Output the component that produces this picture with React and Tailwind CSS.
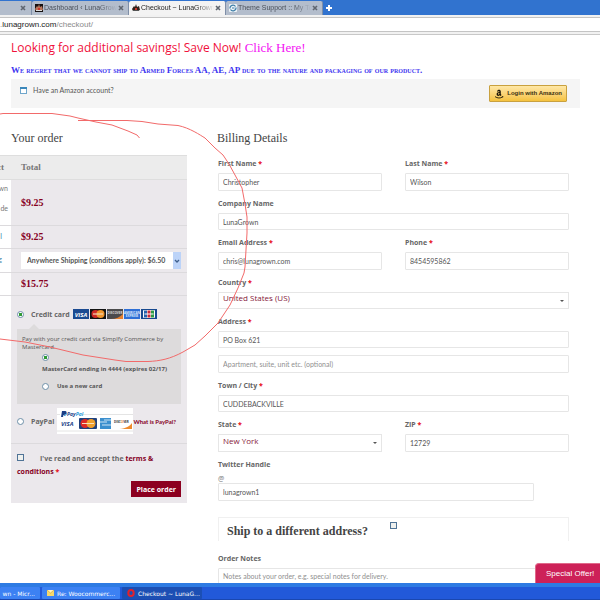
import React from "react";
import clsx from "clsx";

const SERIF = "font-['Liberation_Serif',serif]";
const FIELD =
  "block w-full rounded-[1px] border border-[#e6e6e6] bg-white px-1 font-['Lato',sans-serif] text-[7px] leading-[12px] text-[#555] placeholder:text-[#8f8f8f] outline-none";
const RADIO =
  "block h-[7px] w-[7px] shrink-0 appearance-none rounded-full border border-[#6d8fa8] bg-white checked:bg-[radial-gradient(circle,#2f9a35_0_40%,#ffffff_55%)]";
const CHECKBOX =
  "block h-[7px] w-[7px] shrink-0 appearance-none border border-[#4f7396] bg-[#eef0ee]";

function Close({ className }) {
  return (
    <svg viewBox="0 0 6 6" className={clsx("h-[6px] w-[6px] shrink-0", className)}>
      <path d="M1 1l4 4M5 1l-4 4" stroke="#5f6670" strokeWidth="1.6" />
    </svg>
  );
}

function LunaIcon({ dark }) {
  return (
    <svg viewBox="0 0 8 8" className="h-2 w-2 shrink-0">
      {dark && <rect width="8" height="8" fill="#15100f" />}
      <path d="M0 5l2-3 1 1 1-3 1 3 2-1 1 4-3 1-2-1-2 1z" fill={dark ? "#b8765c" : "#30201a"} />
      <path d="M3 4h2v2H3z" fill="#c6342a" />
      <path d="M1 6h6v1H1z" fill={dark ? "#ddd" : "#555"} />
    </svg>
  );
}

function SupportIcon() {
  return (
    <svg viewBox="0 0 8 8" className="h-2 w-2 shrink-0">
      <rect width="8" height="8" rx="1" fill="#eef4f8" />
      <path d="M1 4.500A3 3 0 0 1 6.500 2.500M7 3.500A3 3 0 0 1 1.500 5.500" fill="none" stroke="#3f7fa8" strokeWidth="1.3" />
      <path d="M3 4h2.500" stroke="#3f7fa8" />
    </svg>
  );
}

function Tab({ icon, label, active }) {
  return (
    <div
      className={clsx(
        "flex w-[97px] shrink-0 items-center gap-px rounded-t-[2px] border-r border-[#7f8fa8] pr-1 pl-[3px]",
        active ? "bg-[#f3f3f3] text-[#222]" : "bg-[#b3bdcc] text-[#4a505a]",
      )}
    >
      {icon}
      <span className="min-w-0 flex-1 overflow-hidden text-[7px] whitespace-nowrap [mask-image:linear-gradient(to_right,#000_75%,transparent)]">
        {label}
      </span>
      <Close />
    </div>
  );
}

function BrowserBar() {
  return (
    <header className="shrink-0 font-['Liberation_Sans',sans-serif]">
      <nav className="flex h-[15px] items-stretch bg-[#3173cf] pt-px">
        <div className="flex w-8 shrink-0 items-center justify-end border-r border-[#7f8fa8] bg-[#b3bdcc] pr-[5px]">
          <Close />
        </div>
        <Tab icon={<LunaIcon dark />} label="Dashboard ‹ LunaGrown" />
        <Tab icon={<LunaIcon />} label="Checkout ~ LunaGrown |" active />
        <Tab icon={<SupportIcon />} label="Theme Support :: My To" />
        <button aria-label="New tab" className="ml-[3px] flex items-center">
          <svg viewBox="0 0 6 6" className="h-[6px] w-[6px]">
            <path d="M3 0v6M0 3h6" stroke="#fff" strokeWidth="2" />
          </svg>
        </button>
      </nav>
      <div className="border-b border-[#c8c8c8] bg-[#f1f1f1] py-[2px]">
        <div className="h-[15px] border-y border-[#c4c4c4] bg-white text-[8px] leading-[13px] whitespace-nowrap text-[#8a8a8a]">
          .<span className="text-[#222]">lunagrown.com</span>/checkout/
        </div>
      </div>
    </header>
  );
}

function AmazonLogo() {
  return (
    <svg viewBox="0 0 10 10" className="h-[10px] w-[10px]">
      <path
        d="M3 2.600C3.300.300 6.800.300 6.800 2.500V5.200l.800.900-1.100 1-.8-.9C4.600 7.500 2.600 7 2.600 5.200 2.600 3.500 4 3.200 5.400 3.100 5.500 1.900 4.500 1.800 4.200 2.800zM5.400 4.100C4.500 4.100 4.100 4.400 4.100 5.100c0 .8 1.300.9 1.300-.5z"
        fill="#1c1608"
      />
      <path d="M1 7.600c2.500 1.800 5.300 1.800 7.700.3" fill="none" stroke="#1c1608" strokeWidth=".9" />
      <path d="M7.600 7.300l1.800-.1-.4 1.600z" fill="#1c1608" />
    </svg>
  );
}

function AmazonBanner() {
  return (
    <div className="mt-[3px] flex h-[29px] items-start justify-between bg-[#f5f5f5] pr-[13px] pl-[9px]">
      <p className="flex items-center gap-[6px] pt-[6px] font-['Lato',sans-serif] text-[7px] leading-[11px] text-[#555]">
        <svg viewBox="0 0 7 7" className="h-[7px] w-[7px]">
          <rect x=".5" y=".5" width="6" height="6" fill="#fff" stroke="#6fa6cb" />
          <path d="M0 1h7" stroke="#3b87ba" strokeWidth="2" />
        </svg>
        Have an Amazon account?
      </p>
      <button className="mt-[6px] flex h-[17px] items-center gap-[3px] rounded-[1px] border border-[#c9a13f] bg-linear-to-b from-[#ffe8a6] to-[#f5c23c] px-1 font-['Liberation_Sans',sans-serif] text-[6px] font-bold whitespace-nowrap text-[#3d3010]">
        <AmazonLogo />
        Login with Amazon
      </button>
    </div>
  );
}

function Visa() {
  return (
    <svg viewBox="0 0 16 10" className="h-[10px] w-4">
      <rect width="16" height="10" fill="#1b4a91" />
      <text x="8" y="7.500" textAnchor="middle" fontSize="6" fontWeight="bold" fontStyle="italic" fill="#fff">VISA</text>
    </svg>
  );
}

function MasterCard() {
  return (
    <svg viewBox="0 0 16 10" className="h-[10px] w-4">
      <rect width="16" height="10" fill="#121212" />
      <circle cx="5.500" cy="5" r="4" fill="#cf2a26" />
      <circle cx="10.500" cy="5" r="4" fill="#f0962d" />
      <path d="M3 5h10" stroke="#f4d9b8" strokeWidth="1.200" />
    </svg>
  );
}

function Discover() {
  return (
    <svg viewBox="0 0 16 10" className="h-[10px] w-4">
      <rect width="16" height="10" fill="#4b4b4d" />
      <path d="M16 5v5H4c5 0 9-2 12-5z" fill="#e58130" />
      <text x="8" y="5" textAnchor="middle" fontSize="3" fontWeight="bold" fill="#ddd">DISCOVER</text>
    </svg>
  );
}

function Amex() {
  return (
    <svg viewBox="0 0 16 10" className="h-[10px] w-4">
      <rect width="16" height="10" fill="#2f6fd6" />
      <text x="8" y="4.500" textAnchor="middle" fontSize="3" fontWeight="bold" fill="#dbe8fb">AMERICAN</text>
      <text x="8" y="8" textAnchor="middle" fontSize="3" fontWeight="bold" fill="#dbe8fb">EXPRESS</text>
    </svg>
  );
}

function Jcb() {
  return (
    <svg viewBox="0 0 16 10" className="h-[10px] w-4">
      <rect width="16" height="10" fill="#17498f" />
      <rect x="2" y="1" width="12" height="8" rx="1" fill="#fff" />
      <rect x="3" y="1.500" width="3" height="7" fill="#2463ab" />
      <rect x="6.500" y="1.500" width="3" height="7" fill="#c92a39" />
      <rect x="10" y="1.500" width="3" height="7" fill="#2f9a45" />
      <path d="M3.500 5h9" stroke="#fff" strokeWidth="1" />
    </svg>
  );
}

function PayPalMark() {
  return (
    <svg viewBox="0 0 76 26" className="h-[26px] w-[76px] shrink-0">
      <rect width="76" height="26" fill="#fff" />
      <path d="M0 6.500h3M25 6.500h51M0 23h76" stroke="#e4e4e4" />
      <path d="M5 3h3.500q2 1 .5 3-1 1-2.500 1L6 9H4z" fill="#1b3f86" />
      <path d="M7 7.500q2.500 0 3-2.500" stroke="#2a9ad8" fill="none" />
      <text x="10" y="8" fontSize="5" fontWeight="bold" fontStyle="italic" fill="#1b3f86">
        Pay<tspan fill="#2a9ad8">Pal</tspan>
      </text>
      <text x="4" y="18" fontSize="6" fontWeight="bold" fontStyle="italic" fill="#1b3f86">VISA</text>
      <rect x="22" y="10" width="18" height="11" rx="1" fill="#20407c" />
      <circle cx="28" cy="15.500" r="4.500" fill="#dc2b27" />
      <circle cx="34" cy="15.500" r="4.500" fill="#f0a02d" />
      <path d="M25 15.500h12" stroke="#f8dfc0" />
      <rect x="43" y="10" width="11" height="11" fill="#3b8fce" />
      <path d="M43 14h7M45 17h9M47 12h7" stroke="#cfe6f6" />
      <path d="M75 15v6H60c7 0 12-2 15-6z" fill="#ee8a2c" />
      <text x="57" y="15" fontSize="3" fontWeight="bold" fill="#333">
        DISC<tspan fill="#ee8a2c">O</tspan>VER
      </text>
    </svg>
  );
}

// the first column runs off the left edge of the window
function OrderRow({ name, height, children }) {
  return (
    <tr className={clsx("border-b border-[#dcdadd]", height)}>
      <td className="bg-white p-0 align-top font-['Lato',sans-serif] text-[7px] leading-[20px] text-[#777]">
        <div className="flex justify-end overflow-hidden pr-[3px]">{name}</div>
      </td>
      <td className="bg-[#ebe8ec] py-0 pr-[6px] pl-[10px]">{children}</td>
    </tr>
  );
}

function Price({ children }) {
  return <span className={clsx(SERIF, "block text-[10px] leading-[12px] font-bold text-[#86001d]")}>{children}</span>;
}

function Order() {
  return (
    <section>
      <h3 className={clsx(SERIF, "pl-[11px] text-[12px] leading-[16px] text-[#444]")}>Your order</h3>
      <table className="mt-[9px] w-full table-fixed border-collapse">
        <colgroup>
          <col className="w-[11px]" />
          <col />
        </colgroup>
        <thead>
          <tr className={clsx(SERIF, "h-6 border-y border-[#dedede] bg-[#ececec] text-left text-[9px] text-[#777]")}>
            <th className="p-0 text-right">
              <div className="flex justify-end overflow-hidden pr-[7px]">ct</div>
            </th>
            <th className="py-0 pl-[10px]">Total</th>
          </tr>
        </thead>
        <tbody>
          <OrderRow
            height="h-[46px]"
            name={
              <span className="-mt-[2px] text-right">
                wn
                <br />
                de
              </span>
            }
          >
            <Price>$9.25</Price>
          </OrderRow>
          <OrderRow height="h-[23px]" name={<span className="pr-[6px] text-[#3a7ea6]">l</span>}>
            <Price>$9.25</Price>
          </OrderRow>
          <OrderRow height="h-6" name={<span className="pr-[6px] text-[#3a7ea6]">g</span>}>
            <div className="flex h-[17px] items-stretch bg-white">
              <select
                aria-label="Shipping"
                className="min-w-0 flex-1 appearance-none pl-[6px] font-['Lato',sans-serif] text-[7px] font-bold text-[#555] outline-none"
              >
                <option>Anywhere Shipping (conditions apply): $6.50</option>
              </select>
              <span className="flex w-2 items-center justify-center bg-[#bcd3f8]">
                <svg viewBox="0 0 6 6" className="h-[6px] w-[6px]">
                  <path d="M1 2l2 2 2-2" fill="none" stroke="#3f5f8c" strokeWidth="1.300" />
                </svg>
              </span>
            </div>
          </OrderRow>
          <OrderRow height="h-[23px]">
            <Price>$15.75</Price>
          </OrderRow>
        </tbody>
      </table>
      <Payment />
    </section>
  );
}

function Payment() {
  return (
    <div className="ml-[11px] bg-[#ebe8ec] pb-[6px] text-[7px] leading-[9px] text-[#666]">
      <div className="border-b border-[#dcdadd] px-[6px] pt-[13px] pb-[9px]">
        <div className="flex items-center">
          <input type="radio" name="method" id="card" defaultChecked className={RADIO} />
          <label htmlFor="card" className="flex items-center gap-[3px] pl-[7px] font-bold">
            Credit card
            <span className="flex gap-px">
              <Visa />
              <MasterCard />
              <Discover />
              <Amex />
              <Jcb />
            </span>
          </label>
        </div>
        <svg viewBox="0 0 10 5" className="mt-[5px] ml-3 block h-[5px] w-[10px]">
          <path d="M0 5l5-5 5 5z" fill="#dddbdc" />
        </svg>
        <div className="bg-[#dddbdc] px-[5px] pt-[6px] pb-[13px]">
          <p className="text-[6px] leading-[8px] text-[#555]">
            Pay with your credit card via Simplfy Commerce by Mastercard.
          </p>
          <div className="pt-[3px] pl-5 text-[6px] font-bold text-[#555]">
            <input type="radio" name="saved" id="saved" defaultChecked className={RADIO} />
            <label htmlFor="saved" className="mt-[4px] block whitespace-nowrap">
              MasterCard ending in 4444 (expires 02/17)
            </label>
            <div className="mt-2 flex items-center gap-2">
              <input type="radio" name="saved" id="new" className={RADIO} />
              <label htmlFor="new">Use a new card</label>
            </div>
          </div>
        </div>
        <div className="mt-1 flex items-center">
          <input type="radio" name="method" id="paypal" className={RADIO} />
          <label htmlFor="paypal" className="flex items-center gap-[3px] pl-[7px] font-bold">
            PayPal
            <PayPalMark />
          </label>
          <a href="#paypal" className="font-['Lato',sans-serif] text-[6px] font-bold whitespace-nowrap text-[#86001d]">
            What is PayPal?
          </a>
        </div>
      </div>
      <div className="px-[6px] pt-2">
        <div className="font-bold leading-[13px]">
          <input type="checkbox" id="terms" className={clsx(CHECKBOX, "mr-4 inline-block")} />
          <label htmlFor="terms">I've read and accept the</label>{" "}
          <a href="#terms" className="text-[#86001d]">
            terms &amp; conditions
          </a>{" "}
          <span className="text-red-600">*</span>
        </div>
        <button className="mt-[3px] ml-auto block h-4 bg-[#8c0020] px-[5px] text-[7px] font-bold text-white">
          Place order
        </button>
      </div>
    </div>
  );
}

function Label({ htmlFor, required, children }) {
  return (
    <label htmlFor={htmlFor} className="mb-[3px] block text-[7px] leading-[12px] font-bold text-[#666]">
      {children}
      {required && <span className="text-red-600"> *</span>}
    </label>
  );
}

function Field({ id, label, required, wide, ...rest }) {
  return (
    <div className={clsx(wide && "col-span-2")}>
      <Label htmlFor={id} required={required}>
        {label}
      </Label>
      <input id={id} className={clsx(FIELD, wide ? "h-[17px]" : "h-[18px]")} {...rest} />
    </div>
  );
}

function SelectField({ id, label, wide, value }) {
  return (
    <div className={clsx(wide && "col-span-2")}>
      <Label htmlFor={id} required>
        {label}
      </Label>
      <div className={clsx("flex items-center border border-[#e6e6e6] pr-1", wide ? "h-[17px]" : "h-[18px]")}>
        <select
          id={id}
          className="min-w-0 flex-1 appearance-none bg-transparent pb-[5px] pl-1 text-[8px] leading-[12px] text-[#86193a] outline-none"
        >
          <option>{value}</option>
        </select>
        <svg viewBox="0 0 4 2" className="h-[2px] w-1">
          <path d="M0 0h4L2 2z" fill="#555" />
        </svg>
      </div>
    </div>
  );
}

function Billing() {
  return (
    <section className="min-w-0 pr-[31px] pl-[30px]">
      <h3 className={clsx(SERIF, "text-[12px] leading-[16px] text-[#444]")}>Billing Details</h3>
      <form className="ml-px">
        <div className="grid grid-cols-2 gap-x-[23px] gap-y-[7px] pt-3">
          <Field id="first" label="First Name" required defaultValue="Christopher" />
          <Field id="last" label="Last Name" required defaultValue="Wilson" />
          <Field id="company" label="Company Name" wide defaultValue="LunaGrown" />
          <Field id="email" label="Email Address" required defaultValue="chris@lunagrown.com" />
          <Field id="phone" label="Phone" required defaultValue="8454595862" />
          <SelectField id="country" label="Country" wide value="United States (US)" />
          <Field id="address" label="Address" required wide defaultValue="PO Box 621" />
          <input
            aria-label="Address line 2"
            placeholder="Apartment, suite, unit etc. (optional)"
            className={clsx(FIELD, "col-span-2 h-[18px]")}
          />
          <Field id="city" label="Town / City" required wide defaultValue="CUDDEBACKVILLE" />
          <SelectField id="state" label="State" value="New York" />
          <Field id="zip" label="ZIP" required defaultValue="12729" />
        </div>
        <div className="mt-[7px]">
          <Label htmlFor="twitter">Twitter Handle</Label>
          <p className="text-[7px] leading-[9px] text-[#777]">@</p>
          <input id="twitter" defaultValue="lunagrown1" className={clsx(FIELD, "h-[18px] max-w-[90%]")} />
        </div>
        <div className="mt-4 flex items-start gap-[22px] border-x border-t border-[#f0f0f0] pt-1 pb-[3px] pl-2">
          <label htmlFor="ship" className={clsx(SERIF, "pt-[2px] text-[12px] leading-[14px] font-bold text-[#444]")}>
            Ship to a different address?
          </label>
          <input type="checkbox" id="ship" className={CHECKBOX} />
        </div>
        <div className="mt-3">
          <Label htmlFor="notes">Order Notes</Label>
          <textarea
            id="notes"
            placeholder="Notes about your order, e.g. special notes for delivery."
            className={clsx(FIELD, "h-10 resize-none py-px")}
          />
        </div>
      </form>
    </section>
  );
}

function PenMarks() {
  return (
    <svg
      viewBox="0 0 260 380"
      className="pointer-events-none absolute top-0 left-0 h-[380px] w-[260px]"
      fill="none"
      stroke="#f26a6a"
      strokeWidth="1"
    >
      <path d="M0 114L3 113.500H52L70 116 78 118 96 122 112 125 128 131 137 135 139.500 138" />
      <path d="M78 120.500H127L142 121.500 158 124 178 125.500C190 128 200 135 205 138L215 148 223 155 229 164 235 175 242 188 245 204 247 217V233L245 267 244 273 238 288 230 305 218 323 205 336 195 345 183 352C170 359 160 361 148 361.500H126L115 360 83 355 50 347 25 342 0 339" />
    </svg>
  );
}

function Taskbar() {
  const item = "flex h-3 items-center gap-[3px] rounded-[1px] px-[5px] whitespace-nowrap";
  return (
    <footer className="flex h-[17px] shrink-0 items-center gap-[2px] border-t-4 border-b border-t-[#2e7be3] border-b-[#1a47b0] bg-[#2259d9] font-['DejaVu_Sans',sans-serif] text-[6px] text-white">
      <button className={clsx(item, "w-10 justify-end bg-[#3c81f3]")}>wn - Micr...</button>
      <button className={clsx(item, "w-[78px] bg-[#3c81f3]")}>
        <svg viewBox="0 0 7 6" className="h-[6px] w-[7px] shrink-0">
          <rect width="7" height="6" fill="#f6d76a" />
          <path d="M0 0l3.500 3L7 0" fill="#fff3c0" stroke="#c99b2b" strokeWidth=".6" />
        </svg>
        Re: Woocommerc...
      </button>
      <button className={clsx(item, "w-20 bg-[#1c4fb4]")}>
        <svg viewBox="0 0 8 8" className="h-2 w-2 shrink-0">
          <ellipse cx="4" cy="4" rx="2.700" ry="3" fill="none" stroke="#e3222b" strokeWidth="2" />
        </svg>
        Checkout ~ LunaG...
      </button>
    </footer>
  );
}

export default function App() {
  return (
    <div className="relative flex h-screen flex-col overflow-hidden bg-white font-['Open_Sans',sans-serif]">
      <BrowserBar />
      <main className="min-h-0 flex-1 overflow-hidden">
        <div className="mr-5 ml-[11px]">
          <p className="pt-1 text-[12px] leading-[18px] font-medium text-[#f0103c]">
            Looking for additional savings! Save Now!{" "}
            <a href="#savings" className={clsx(SERIF, "text-[13px] font-normal text-[#f312f3]")}>
              Click Here!
            </a>
          </p>
          <p
            className={clsx(
              SERIF,
              "mt-[7px] text-[9px] leading-[12px] font-bold text-[#3d35f0] [font-variant:small-caps]",
            )}
          >
            We regret that we cannot ship to Armed Forces AA, AE, AP due to the nature and packaging of our product.
          </p>
          <AmazonBanner />
        </div>
        <div className="mt-[22px] grid grid-cols-[187px_minmax(0,1fr)]">
          <Order />
          <Billing />
        </div>
      </main>
      <button className="absolute right-0 bottom-[17px] flex h-5 w-[65px] items-center gap-2 rounded-tl-[4px] border-t border-l border-[#e0698a] bg-[#cd2158] pl-[10px] font-['Liberation_Sans',sans-serif] text-[8px] whitespace-nowrap text-white">
        Special Offer!
        <svg viewBox="0 0 4 3" className="h-[3px] w-1 shrink-0">
          <path d="M0 3l2-3 2 3z" fill="#fff" />
        </svg>
      </button>
      <PenMarks />
      <Taskbar />
    </div>
  );
}
